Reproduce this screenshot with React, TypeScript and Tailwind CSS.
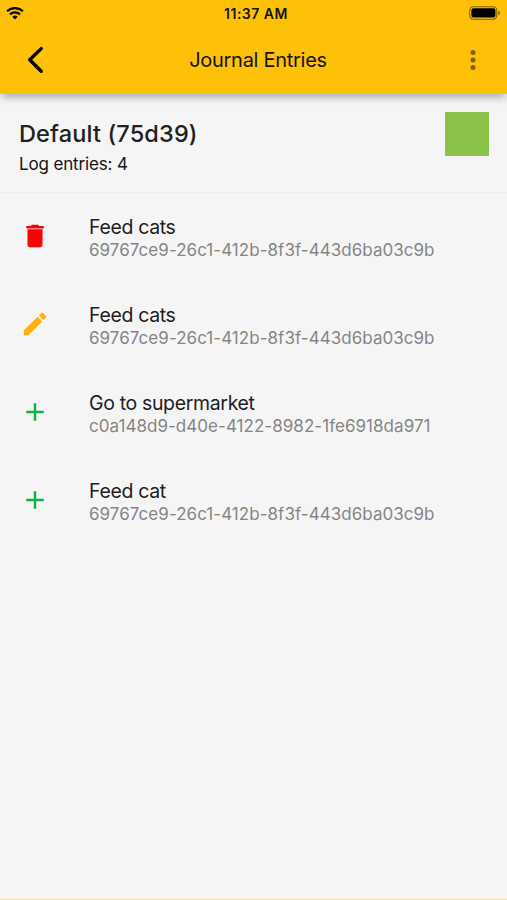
type EntryKind = "delete" | "edit" | "add";

type Entry = {
  kind: EntryKind;
  title: string;
  uuid: string;
};

const entries: Entry[] = [
  { kind: "delete", title: "Feed cats", uuid: "69767ce9-26c1-412b-8f3f-443d6ba03c9b" },
  { kind: "edit", title: "Feed cats", uuid: "69767ce9-26c1-412b-8f3f-443d6ba03c9b" },
  { kind: "add", title: "Go to supermarket", uuid: "c0a148d9-d40e-4122-8982-1fe6918da971" },
  { kind: "add", title: "Feed cat", uuid: "69767ce9-26c1-412b-8f3f-443d6ba03c9b" },
];

const icons: Record<EntryKind, { path: string; color: string }> = {
  delete: {
    path: "M6 19c0 1.1.9 2 2 2h8c1.1 0 2-.9 2-2V6.6H6v12.4zM19 4h-3.5l-1-1h-5l-1 1H5v2h14V4z",
    color: "text-[#f50505]",
  },
  edit: {
    path: "M3 17.25V21h3.75L17.81 9.94l-3.75-3.75L3 17.25zM20.71 7.04c.39-.39.39-1.02 0-1.41l-2.34-2.34c-.39-.39-1.02-.39-1.41 0l-1.83 1.83 3.75 3.75 1.83-1.83z",
    color: "text-[#ffb013]",
  },
  add: {
    path: "M19 13h-6v6h-2v-6H5v-2h6V5h2v6h6v2z",
    color: "text-[#12b24b]",
  },
};

function StatusBar() {
  return (
    <div className="grid h-[26px] grid-cols-3 items-center pl-1.5 pr-[6px]">
      <svg width="18" height="13" viewBox="0 0 18 13" fill="none" stroke="#000">
        <path d="M1.1 4.3a11.2 11.2 0 0 1 15.8 0" strokeWidth="2.2" />
        <path d="M4 7.4a7.1 7.1 0 0 1 10 0" strokeWidth="2.2" />
        <path d="M9 12.4 6.3 9.8a3.8 3.8 0 0 1 5.4 0z" fill="#000" stroke="none" />
      </svg>
      <span className="whitespace-nowrap pl-[5px] pt-px text-center text-[14px] font-semibold leading-4 tracking-[0.5px]">
        11:37 AM
      </span>
      <svg className="justify-self-end" width="32" height="14" viewBox="0 0 32 14">
        <rect x="0.8" y="0.8" width="27" height="12.4" rx="3.6" fill="none" stroke="#7d5f06" strokeWidth="1.1" />
        <rect x="2.4" y="2.3" width="24" height="9.2" rx="2" fill="#000" />
        <path d="M29.4 4.8c2 .6 2 3.8 0 4.4z" fill="#7d5f06" />
      </svg>
    </div>
  );
}

function Header() {
  return (
    <header className="relative h-[94px] bg-[#ffc107] shadow-[0_5px_8px_-2px_rgba(0,0,0,0.32)]">
      <StatusBar />
      <div className="flex h-[68px] items-center justify-between pl-[26px] pr-[24px]">
        <button aria-label="Back" className="flex w-5">
          <svg width="20" height="28" viewBox="0 0 20 28" fill="none" stroke="#000" strokeWidth="3.4" strokeLinecap="round" strokeLinejoin="round">
            <path d="M15.2 2.6 3.7 13.8l11.5 11.4" />
          </svg>
        </button>
        <h1 className="pl-[7px] text-[20px] leading-6 tracking-[-0.28px]">Journal Entries</h1>
        <button aria-label="More" className="flex w-5 justify-center">
          <svg width="6" height="22" viewBox="0 0 6 22" fill="#80610a">
            <circle cx="3" cy="3.6" r="2.5" />
            <circle cx="3" cy="11" r="2.5" />
            <circle cx="3" cy="18.4" r="2.5" />
          </svg>
        </button>
      </div>
    </header>
  );
}

function EntryRow({ entry }: { entry: Entry }) {
  const icon = icons[entry.kind];
  return (
    <li className="flex h-[88px] items-start pl-[19.5px]">
      <svg className={`mt-5 shrink-0 ${icon.color}`} width="30" height="30" viewBox="0 0 24 24" fill="currentColor">
        <path d={icon.path} />
      </svg>
      <div className="ml-[39.5px] mt-[15px] whitespace-nowrap">
        <p className="mb-px text-[19.5px] leading-[22px] tracking-[-0.35px] text-[#212121]">{entry.title}</p>
        <p className="text-[17px] leading-[22px] tracking-[0.04px] text-[#858585]">{entry.uuid}</p>
      </div>
    </li>
  );
}

export default function App() {
  return (
    <div className="flex h-[900px] w-[507px] flex-col overflow-hidden border-b border-[#efdcb4] bg-[#f5f5f5] font-['Inter',sans-serif] text-[#141414]">
      <Header />
      <section className="flex h-[99px] items-start justify-between border-b border-[#eeeeee] pl-[19px] pr-[18px] pt-[18px]">
        <div className="whitespace-nowrap pt-2">
          <h2 className="text-[23.5px] font-medium leading-7 tracking-[0.15px] text-[#212121]">Default (75d39)</h2>
          <p className="mt-[6px] text-[17px] leading-5 tracking-[-0.15px]">Log entries: 4</p>
        </div>
        <div className="size-[44px] bg-[#8bc34a]" />
      </section>
      <ul className="flex-1 border-b border-[#fff3cf] pt-2">
        {entries.map((entry, i) => (
          <EntryRow key={i} entry={entry} />
        ))}
      </ul>
    </div>
  );
}
